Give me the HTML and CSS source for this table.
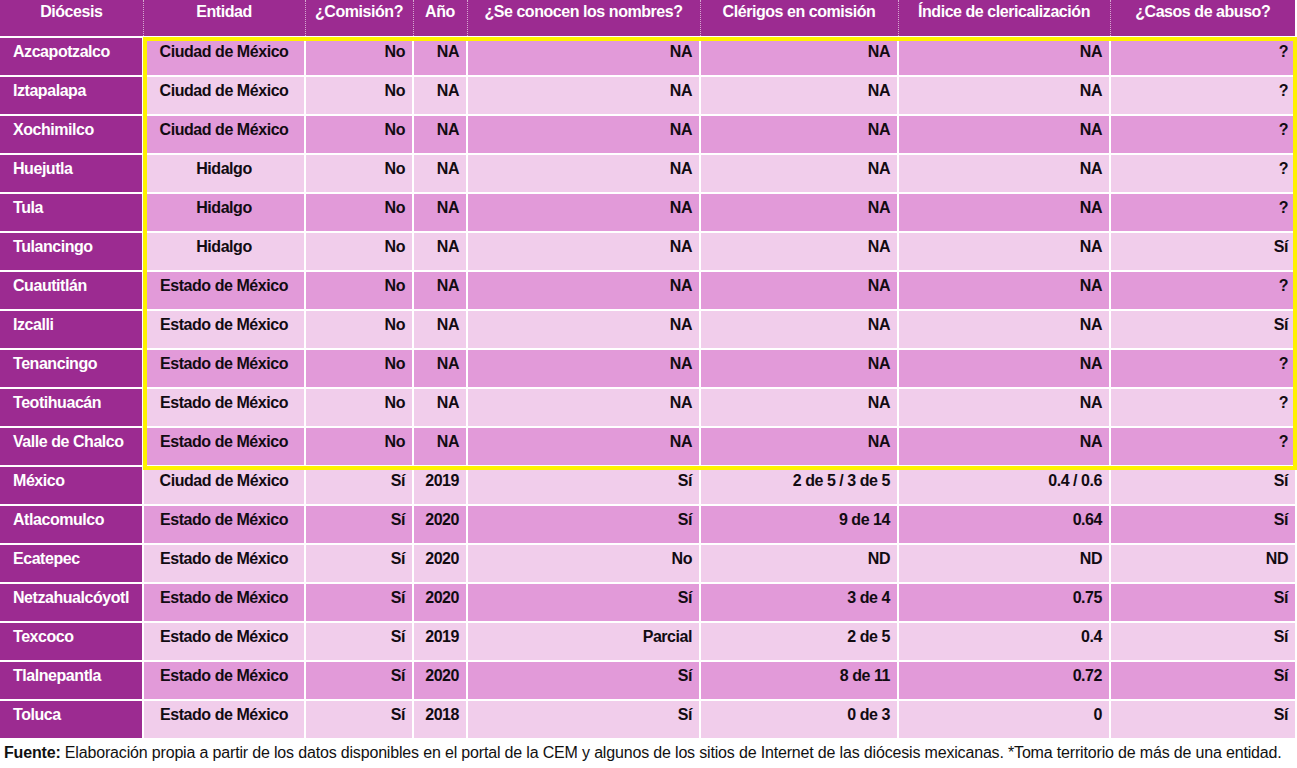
FILE: index.html
```html
<!DOCTYPE html>
<html lang="es">
<head>
<meta charset="utf-8">
<title>Diócesis</title>
<link rel="stylesheet" href="styles.css">
</head>
<body>
<div class="wrap">
<table class="tbl">
<colgroup>
<col style="width:143px"><col style="width:162px"><col style="width:108px"><col style="width:54px"><col style="width:233px"><col style="width:198px"><col style="width:212px"><col style="width:185px">
</colgroup>
<thead>
<tr><th>Diócesis</th><th>Entidad</th><th>¿Comisión?</th><th>Año</th><th>¿Se conocen los nombres?</th><th>Clérigos en comisión</th><th>Índice de clericalización</th><th>¿Casos de abuso?</th></tr>
</thead>
<tbody>
<tr class="d"><td>Azcapotzalco</td><td>Ciudad de México</td><td>No</td><td>NA</td><td>NA</td><td>NA</td><td>NA</td><td>?</td></tr>
<tr class="l"><td>Iztapalapa</td><td>Ciudad de México</td><td>No</td><td>NA</td><td>NA</td><td>NA</td><td>NA</td><td>?</td></tr>
<tr class="d"><td>Xochimilco</td><td>Ciudad de México</td><td>No</td><td>NA</td><td>NA</td><td>NA</td><td>NA</td><td>?</td></tr>
<tr class="l"><td>Huejutla</td><td>Hidalgo</td><td>No</td><td>NA</td><td>NA</td><td>NA</td><td>NA</td><td>?</td></tr>
<tr class="d"><td>Tula</td><td>Hidalgo</td><td>No</td><td>NA</td><td>NA</td><td>NA</td><td>NA</td><td>?</td></tr>
<tr class="l"><td>Tulancingo</td><td>Hidalgo</td><td>No</td><td>NA</td><td>NA</td><td>NA</td><td>NA</td><td>Sí</td></tr>
<tr class="d"><td>Cuautitlán</td><td>Estado de México</td><td>No</td><td>NA</td><td>NA</td><td>NA</td><td>NA</td><td>?</td></tr>
<tr class="l"><td>Izcalli</td><td>Estado de México</td><td>No</td><td>NA</td><td>NA</td><td>NA</td><td>NA</td><td>Sí</td></tr>
<tr class="d"><td>Tenancingo</td><td>Estado de México</td><td>No</td><td>NA</td><td>NA</td><td>NA</td><td>NA</td><td>?</td></tr>
<tr class="l"><td>Teotihuacán</td><td>Estado de México</td><td>No</td><td>NA</td><td>NA</td><td>NA</td><td>NA</td><td>?</td></tr>
<tr class="d"><td>Valle de Chalco</td><td>Estado de México</td><td>No</td><td>NA</td><td>NA</td><td>NA</td><td>NA</td><td>?</td></tr>
<tr class="l"><td>México</td><td>Ciudad de México</td><td>Sí</td><td>2019</td><td>Sí</td><td>2 de 5 / 3 de 5</td><td>0.4 / 0.6</td><td>Sí</td></tr>
<tr class="d"><td>Atlacomulco</td><td>Estado de México</td><td>Sí</td><td>2020</td><td>Sí</td><td>9 de 14</td><td>0.64</td><td>Sí</td></tr>
<tr class="l"><td>Ecatepec</td><td>Estado de México</td><td>Sí</td><td>2020</td><td>No</td><td>ND</td><td>ND</td><td>ND</td></tr>
<tr class="d"><td>Netzahualcóyotl</td><td>Estado de México</td><td>Sí</td><td>2020</td><td>Sí</td><td>3 de 4</td><td>0.75</td><td>Sí</td></tr>
<tr class="l"><td>Texcoco</td><td>Estado de México</td><td>Sí</td><td>2019</td><td>Parcial</td><td>2 de 5</td><td>0.4</td><td>Sí</td></tr>
<tr class="d"><td>Tlalnepantla</td><td>Estado de México</td><td>Sí</td><td>2020</td><td>Sí</td><td>8 de 11</td><td>0.72</td><td>Sí</td></tr>
<tr class="l"><td>Toluca</td><td>Estado de México</td><td>Sí</td><td>2018</td><td>Sí</td><td>0 de 3</td><td>0</td><td>Sí</td></tr>
</tbody>
</table>
<div class="highlight"></div>
</div>
<p class="note"><b>Fuente:</b> Elaboración propia a partir de los datos disponibles en el portal de la CEM y algunos de los sitios de Internet de las diócesis mexicanas. *Toma territorio de más de una entidad.</p>
</body>
</html>
```
FILE: styles.css
```css
html, body {
  margin: 0;
  padding: 0;
  background: #ffffff;
}
body {
  font-family: "Liberation Sans", Arial, sans-serif;
  color: #120b12;
}
.wrap {
  position: relative;
  width: 1295px;
}
.tbl {
  border-collapse: collapse;
  table-layout: fixed;
  width: 1295px;
}
.tbl th {
  background: #9c2b91;
  color: #ffffff;
  font-weight: bold;
  font-size: 16px;
  letter-spacing: -0.45px;
  text-align: center;
  vertical-align: top;
  height: 37px;
  padding: 3px 4px 0;
  box-sizing: border-box;
  border-left: 1px dotted #d6a8d0;
  border-bottom: 2px solid #ffffff;
  white-space: nowrap;
}
.tbl th:first-child {
  border-left: none;
}
.tbl td {
  font-weight: bold;
  font-size: 16px;
  letter-spacing: -0.45px;
  height: 39px;
  box-sizing: border-box;
  padding: 5px 7px 0;
  vertical-align: top;
  text-align: right;
  border: 2px solid #ffffff;
  border-top: none;
  white-space: nowrap;
}
.tbl td:nth-child(2) {
  text-align: center;
}
.tbl td:first-child {
  background: #9c2b91;
  color: #ffffff;
  text-align: left;
  padding-left: 13px;
  border-left: none;
}
.tbl td:last-child {
  border-right: none;
}
.tbl tr.d td {
  background: #e29ad9;
}
.tbl tr.l td {
  background: #f1cdeb;
}
.tbl tr td:first-child {
  background: #9c2b91;
}
.highlight {
  position: absolute;
  left: 143px;
  top: 37px;
  width: 1154px;
  height: 433px;
  box-sizing: border-box;
  border: 4px solid #fff200;
  pointer-events: none;
}
.note {
  margin: 0;
  padding: 4px 0 0 4px;
  font-size: 16px;
  letter-spacing: -0.17px;
  color: #111111;
  white-space: nowrap;
}
.note b {
  font-weight: bold;
}
```
